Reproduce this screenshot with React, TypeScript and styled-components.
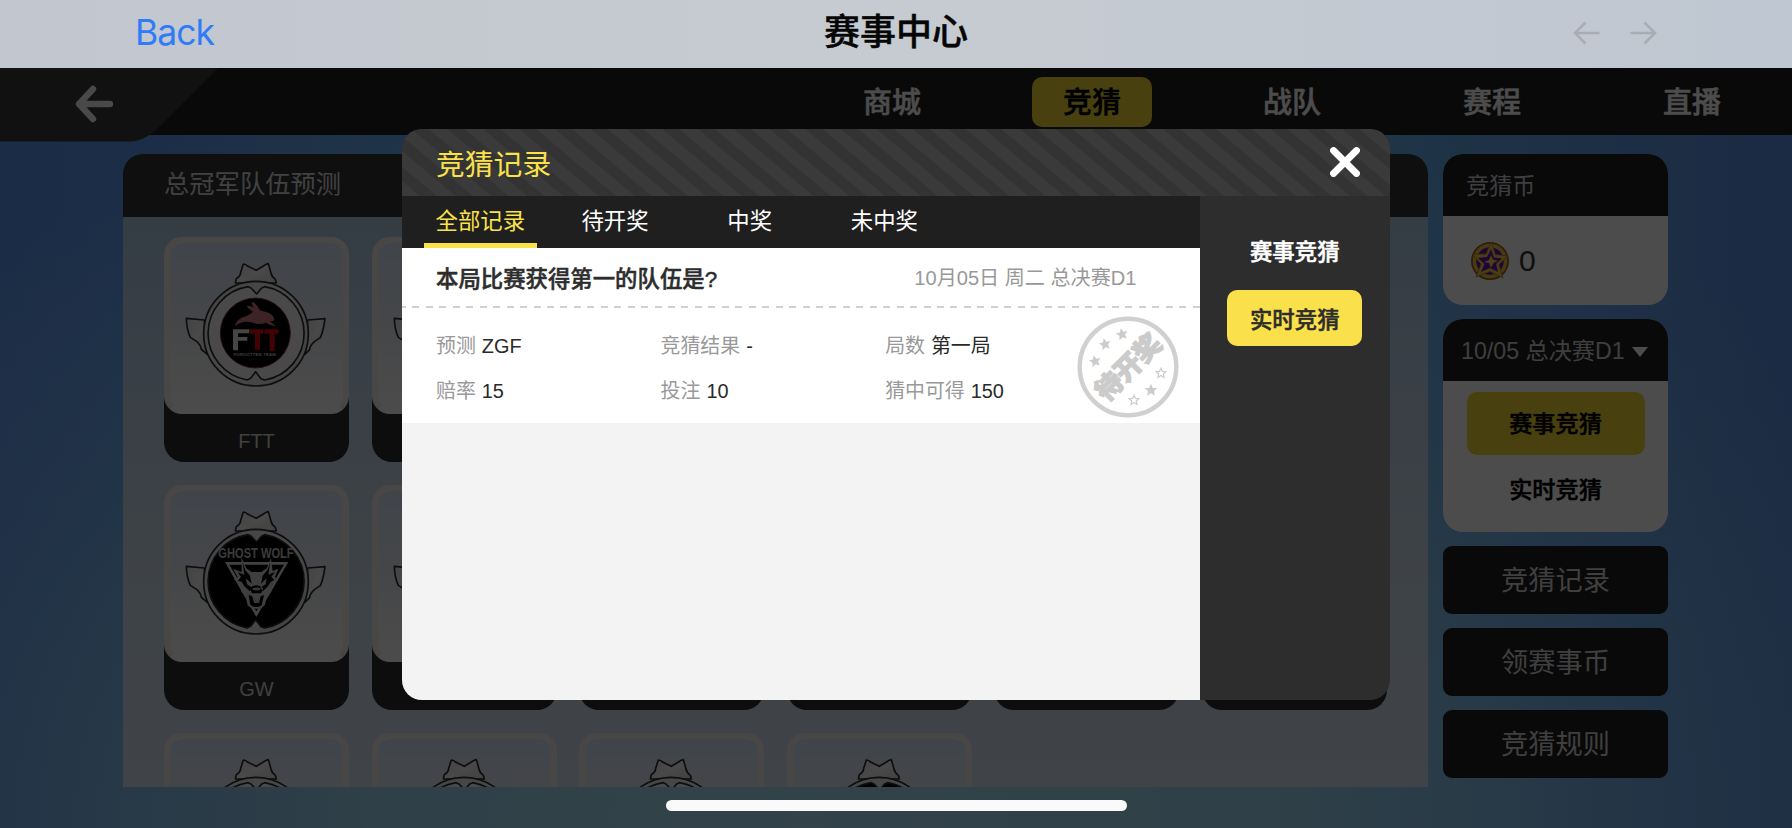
import * as React from 'react';
import styled, {createGlobalStyle, css} from 'styled-components';

const GlobalStyle = createGlobalStyle`
  * {
    box-sizing: border-box;
  }

  body {
    margin: 0;
    overflow: hidden;
    font-family: 'Liberation Sans', 'Noto Sans CJK SC', sans-serif;
    font-weight: 400;
  }
`;

const semibold = css`
  font-weight: 500;
  -webkit-text-stroke: 0.5px currentColor;
`;

const Screen = styled.div`
  position: relative;
  display: flex;
  flex-direction: column;
  width: 1792px;
  height: 828px;
  overflow: hidden;
`;

const TitleBar = styled.header`
  flex: 0 0 68px;
  display: grid;
  grid-template-columns: 1fr auto 1fr;
  align-items: center;
  padding: 0 135px 3px;
  background: linear-gradient(90deg, #c2c6cf, #c6cbd1 50%, #bfc7d2);
`;

const BackLink = styled.a`
  font: 400 35.5px/40px Inter, sans-serif;
  letter-spacing: -1px;
  color: #2f7cf6;
`;

const PageTitle = styled.h1`
  margin: 0;
  font-size: 36px;
  line-height: 40px;
  color: #060606;
  ${semibold};
`;

const HistoryButtons = styled.div`
  display: flex;
  justify-content: flex-end;
  gap: 28px;
`;

const Page = styled.main`
  flex: 1;
  display: flex;
  flex-direction: column;
  background: radial-gradient(
      ellipse 1250px 800px at 45% 100%,
      #aadff3 0%,
      rgba(165, 218, 240, 0.9) 35%,
      rgba(140, 200, 240, 0.4) 70%,
      rgba(120, 190, 240, 0) 100%
    ),
    linear-gradient(90deg, #5a93ec, #6eb8f4 40%, #6eb8f4 70%, #5a8ee0);
`;

const Nav = styled.nav`
  flex: 0 0 67px;
  display: flex;
  align-items: flex-start;
  justify-content: space-between;
  height: 67px;
  min-height: 0;
  background: #202020;
`;

const NavItems = styled.div`
  display: flex;
  padding-top: 8.5px;
`;

const NavItem = styled.div`
  width: 200px;
  display: flex;
  justify-content: center;
`;

const NavLabel = styled.span<{$active?: boolean}>`
  width: 120px;
  height: 50px;
  border-radius: 10px;
  font-size: 29px;
  line-height: 53px;
  text-align: center;
  color: ${props => (props.$active ? '#000' : '#fff')};
  background: ${props => (props.$active ? '#f5d632' : 'none')};
  ${semibold};
`;

const Content = styled.div`
  display: flex;
  gap: 15px;
  padding: 19px 0 0 123px;
`;

const Panel = styled.section`
  width: 1305px;
`;

const PanelHeader = styled.div`
  height: 63px;
  padding-left: 41px;
  border-radius: 20px 20px 0 0;
  font-size: 25.3px;
  line-height: 60px;
  color: #dadada;
  background: #333;
`;

const TeamGrid = styled.div`
  display: grid;
  grid-template-columns: repeat(6, 185px);
  gap: 23px 22.5px;
  align-content: start;
  height: 570px;
  padding: 20px 0 0 41px;
  overflow: hidden;
  background: linear-gradient(#b0cbe5, #cfdeee 60%, #d5e2ee);
`;

const TeamCard = styled.div`
  height: 225px;
  border-radius: 0 0 20px 20px;
  background: linear-gradient(transparent 120px, #2c2c2c 120px);
`;

const TeamPicture = styled.div`
  height: 177px;
  padding-top: 12px;
  border: 6px solid #f3eee8;
  border-bottom-color: #fbfbfb;
  border-radius: 18px;
  text-align: center;
  background: linear-gradient(#d8e4f7, #e8ecf2 50%, #fbfbfb 95%);
`;

const TeamName = styled.div`
  font-size: 20px;
  line-height: 54px;
  text-align: center;
  color: #d6d6d6;
`;

const Aside = styled.aside`
  width: 225px;
  display: flex;
  flex-direction: column;
  gap: 14px;
`;

const AsideCard = styled.div<{$height: number}>`
  height: ${props => props.$height}px;
  border-radius: 20px;
  overflow: hidden;
  background: #fff;
`;

const AsideHeader = styled.div<{$indent: number}>`
  display: flex;
  align-items: center;
  gap: 7px;
  height: 61.5px;
  padding: 0 0 2px ${props => props.$indent}px;
  font-size: 23.2px;
  color: #cfcfcf;
  background: #1e1e1e;
`;

const Caret = styled.svg`
  margin-top: 5px;
`;

const CoinRow = styled.div`
  display: flex;
  align-items: center;
  gap: 9px;
  padding: 25px 27px;
  font-size: 30px;
  line-height: 38px;
  color: #333;
`;

const MatchList = styled.div`
  display: flex;
  flex-direction: column;
  align-items: center;
  padding-top: 11px;
  gap: 3px;
`;

const MatchItem = styled.div<{$active?: boolean}>`
  width: 178px;
  height: 63px;
  border-radius: 10px;
  font-size: 23.2px;
  line-height: 65px;
  text-align: center;
  color: #000;
  ${semibold};
  ${props =>
    props.$active &&
    css`
      background: #f5d632;
    `};
`;

const AsideButton = styled.div`
  height: 68px;
  border-radius: 9px;
  font-size: 27.2px;
  line-height: 70px;
  text-align: center;
  color: #d2d2d2;
  background: #1e1e1e;
`;

const Overlay = styled.div`
  position: absolute;
  top: 68px;
  left: 0;
  width: 1792px;
  height: 760px;
  padding: 61px 402px 0;
  background: rgba(0, 0, 0, 0.7);
`;

const Dialog = styled.div`
  display: flex;
  flex-direction: column;
  width: 988px;
  height: 570.5px;
  border-radius: 20px;
  overflow: hidden;
  background: #2d2d2d;
`;

const DialogHeader = styled.div`
  flex: 0 0 67px;
  display: flex;
  align-items: center;
  justify-content: space-between;
  padding: 0 30px 1px 34px;
  font-size: 28.8px;
  color: #fae24a;
  background: repeating-linear-gradient(
    40deg,
    #3a3a3a 0,
    #3a3a3a 11px,
    #333 12px,
    #333 22px,
    #3a3a3a 23px
  );
`;

const DialogBody = styled.div`
  flex: 1;
  display: flex;
`;

const Records = styled.div`
  width: 797.5px;
  background: #f3f3f3;
`;

const Tabs = styled.div`
  display: flex;
  height: 52px;
  padding-left: 11px;
  background: #1f1f1f;
`;

const Tab = styled.div<{$active?: boolean}>`
  width: 134.7px;
  font-size: 22.4px;
  line-height: 51px;
  text-align: center;
  color: ${props => (props.$active ? '#fae24a' : '#fff')};

  &::after {
    content: '';
    display: ${props => (props.$active ? 'block' : 'none')};
    width: 112.5px;
    height: 5px;
    margin: -4px auto 0;
    background: #fae24a;
  }
`;

const Record = styled.article`
  height: 175px;
  background: #fff;
`;

const RecordHeader = styled.div`
  display: flex;
  justify-content: space-between;
  align-items: center;
  height: 60px;
  padding: 0 63px 3px 34px;
  background: repeating-linear-gradient(
      90deg,
      #d0d0d0 0,
      #d0d0d0 7px,
      transparent 7px,
      transparent 13.45px
    ) -3px 100% / 900px 2px no-repeat;
`;

const Question = styled.span`
  font-size: 22.4px;
  color: #2d2d2d;
  ${semibold};
`;

const MatchDate = styled.span`
  font-size: 20.1px;
  color: #999;
`;

const RecordBody = styled.div`
  position: relative;
  display: grid;
  grid-template-columns: repeat(3, 224.6px);
  grid-auto-rows: 45px;
  padding: 15px 0 0 34px;
`;

const Field = styled.div`
  font-size: 19.9px;
  line-height: 46px;
  color: #999;
  white-space: nowrap;
`;

const Value = styled.span`
  margin-left: 6px;
  color: #2a2a2a;
`;

const Stamp = styled.svg`
  position: absolute;
  top: 8px;
  right: 21px;
`;

const TypeList = styled.div`
  flex: 1;
  display: flex;
  flex-direction: column;
  align-items: center;
  gap: 12px;
  padding-top: 26px;
`;

const TypeButton = styled.div<{$active?: boolean}>`
  width: 135px;
  height: 56px;
  border-radius: 10px;
  font-size: 22.4px;
  line-height: 61px;
  text-align: center;
  color: ${props => (props.$active ? '#2d2d2d' : '#fff')};
  background: ${props => (props.$active ? '#fae04a' : 'none')};
  ${semibold};
`;

const HomeIndicator = styled.div`
  position: absolute;
  left: 666px;
  bottom: 17px;
  width: 461px;
  height: 11px;
  border-radius: 6px;
  background: #fafafa;
`;

const BackTab = () => (
  <svg width="220" height="74" viewBox="0 0 220 74">
    <path d="M0 0H218L157 61Q144 73.500 130 73.500H0Z" fill="#393939" />
    <path
      d="M110 36H80M93 21L79 36L93 51"
      fill="none"
      stroke="#f4f4f4"
      strokeWidth="6.400"
      strokeLinecap="round"
      strokeLinejoin="round"
    />
  </svg>
);

const HistoryArrow = ({forward}: {forward?: boolean}) => (
  <svg width="28" height="24" viewBox="0 0 28 24">
    <path
      d={forward ? 'M1.500 12H26M15.500 1.500L26 12L15.500 22.500' : 'M26.500 12H2M12.500 1.500L2 12L12.500 22.500'}
      fill="none"
      stroke="#a9adb2"
      strokeWidth="2.500"
    />
  </svg>
);

const FttLogo = () => (
  <g>
    <circle cx="229" cy="234" r="105" fill="#000" stroke="#8a3038" strokeWidth="3" />
    <path
      d="M167 214Q174 190 202 183Q214 178 222 170Q206 160 203 153Q211 150 224 158Q216 145 221 140Q234 148 242 166Q255 170 270 174Q286 183 286 194Q282 200 272 199L291 214Q275 213 261 203Q236 211 217 202Q190 195 167 214Z"
      fill="#c87880"
    />
    <path d="M162 223H211V235H177V246H205V257H177V286H162Z" fill="#e6e6e6" />
    <path
      d="M213 223H252V236H243V284H228V236H211ZM257 223H298V236H287V287H272V236H255Z"
      fill="#e00c10"
    />
    <text x="227" y="302" fontSize="13" fontWeight="700" fill="#ccc" textAnchor="middle" textLength="127">
      FORGOTTEN TEAM
    </text>
  </g>
);

const WolfLogo = () => (
  <g>
    <text
      x="231"
      y="164"
      fontSize="43"
      fontWeight="700"
      fill="#c4c4c4"
      textAnchor="middle"
      textLength="226"
      lengthAdjust="spacingAndGlyphs"
    >
      GHOST WOLF
    </text>
    <path d="M138 177H328L232 342Z" fill="#ddd" />
    <path d="M151 185H315L232 325Z" fill="#000" />
    <path
      d="M187 163L202 196L218 207H247L263 196L276 166L281 204L298 197L288 222L297 232L281 243L277 267L264 276L258 305L245 317H219L206 307L199 276L187 267L182 243L164 229L176 222L162 198L188 207Z"
      fill="#d0d0d0"
    />
    <path
      d="M191 178L199 202L213 218L218 242L200 226L204 244L220 254L212 264L196 250L188 236L177 233L186 221L176 208L196 215ZM273 180L265 202L251 218L246 242L263 226L260 244L244 254L252 264L267 250L276 236L286 231L277 221L288 207L268 215ZM212 256Q232 238 253 256L246 271H219ZM209 276L220 280L225 300H240L245 280L255 276L248 307L238 312H225L214 305Z"
      fill="#000"
    />
    <path d="M219 257Q232 250 246 257L240 262H225ZM226 279L232 293L239 279V298H226Z" fill="#bbb" />
  </g>
);

const Badge = ({team}: {team: string}) => {
  const dark = team === 'GW' || team === 'D4';
  return (
    <svg width="155" height="140" viewBox="0 0 465 420">
      <defs>
        <linearGradient id="metal" x1="0" y1="0" x2="1" y2="1">
          <stop offset="0" stopColor="#e2e2e2" />
          <stop offset="0.5" stopColor="#f4f4f4" />
          <stop offset="1" stopColor="#dadada" />
        </linearGradient>
      </defs>
      <g fill="url(#metal)" stroke="#2c2c2c" strokeWidth="5" strokeLinejoin="round">
        <path d="M76 195L22 190Q23 225 34 247L54 260Q65 270 67 283L84 297Z" />
        <path d="M386 195L438 191Q433 229 424 248L407 259Q392 272 392 284L379 297Z" />
        <path d="M169 84L172 71Q184 64 185 52L193 27Q201 27 207 34L232 46L252 34Q260 27 268 26L276 54Q278 65 289 73L292 84Z" />
        <circle cx="231" cy="236" r="157" />
        <path
          d="M207 95L216 99L233 117L248 99L257 95A142 142 0 0 1 257 375L246 371L230 350L215 370L204 375A142 142 0 0 1 207 95Z"
          fill={dark ? '#000' : '#f6f6f6'}
        />
      </g>
      {team === 'GW' && <WolfLogo />}
      {team === 'FTT' && <FttLogo />}
    </svg>
  );
};

const Coin = () => (
  <svg width="40" height="40" viewBox="0 0 40 40">
    <circle cx="20" cy="20" r="17.500" fill="#6a10b0" stroke="#a65d22" strokeWidth="3" />
    <circle cx="20" cy="20" r="15.500" fill="none" stroke="#e8c83b" strokeWidth="3.500" />
    <path
      d="M21 1L25.500 13.500L38 15L29 23.500L33 37L20 30.500L6 36L11 23L2 13L16 13Z"
      fill="#ecd046"
      stroke="#a9772b"
      strokeWidth="0.800"
    />
    <path d="M21 8L24 16.500L32 17.500L26 23L28 31L20 27L11 31L14.500 23L8 17L17 16Z" fill="#6a10b0" />
    <path d="M21 14L23 18.500L28 20L23.500 22L21 27L19 22L14 21L19 19Z" fill="#f4db55" />
  </svg>
);

const star = 'M0-6L1.800-2L6-1.800L2.800 1.200L3.800 5.500L0 3.200L-3.800 5.500L-2.800 1.200L-6-1.800L-1.800-2Z';

const PendingStamp = () => (
  <Stamp width="102" height="102" viewBox="-51 -51 102 102">
    <circle r="48.300" fill="none" stroke="#d0d0d0" strokeWidth="4.400" />
    {[[-33, -6], [-23, -23], [-6, -33]].map(([x, y]) => (
      <path key={x} d={star} transform={`translate(${x} ${y}) rotate(-12)`} fill="#ccc" />
    ))}
    {[[33, 6], [23, 23], [6, 33]].map(([x, y]) => (
      <path
        key={x}
        d={star}
        transform={`translate(${x} ${y}) scale(0.800)`}
        fill={x === 23 ? '#ccc' : 'none'}
        stroke="#ccc"
        strokeWidth="1.500"
      />
    ))}
    <text
      transform="rotate(-45)"
      y="10"
      fontSize="27"
      fontWeight="900"
      textAnchor="middle"
      fill="#cbcbcb"
      stroke="#cbcbcb"
      strokeWidth="1.200"
    >
      待开奖
    </text>
  </Stamp>
);

const navItems = ['商城', '竞猜', '战队', '赛程', '直播'];
const tabs = ['全部记录', '待开奖', '中奖', '未中奖'];
const teams = ['FTT', 'A2', 'A3', 'A4', 'A5', 'A6', 'GW', 'B2', 'B3', 'B4', 'B5', 'B6', 'D1', 'D2', 'D3', 'D4'];
const fields = [
  ['预测', 'ZGF'],
  ['竞猜结果', '-'],
  ['局数', '第一局'],
  ['赔率', '15'],
  ['投注', '10'],
  ['猜中可得', '150'],
];

const App: React.FC = () => {
  return (
    <Screen>
      <GlobalStyle />
      <TitleBar>
        <BackLink>Back</BackLink>
        <PageTitle>赛事中心</PageTitle>
        <HistoryButtons>
          <HistoryArrow />
          <HistoryArrow forward />
        </HistoryButtons>
      </TitleBar>
      <Page>
        <Nav>
          <BackTab />
          <NavItems>
            {navItems.map(item => (
              <NavItem key={item}>
                <NavLabel $active={item === '竞猜'}>{item}</NavLabel>
              </NavItem>
            ))}
          </NavItems>
        </Nav>
        <Content>
          <Panel>
            <PanelHeader>总冠军队伍预测</PanelHeader>
            <TeamGrid>
              {teams.map(team => (
                <TeamCard key={team}>
                  <TeamPicture>
                    <Badge team={team} />
                  </TeamPicture>
                  <TeamName>{team === 'FTT' || team === 'GW' ? team : null}</TeamName>
                </TeamCard>
              ))}
            </TeamGrid>
          </Panel>
          <Aside>
            <AsideCard $height={151}>
              <AsideHeader $indent={23}>竞猜币</AsideHeader>
              <CoinRow>
                <Coin />0
              </CoinRow>
            </AsideCard>
            <AsideCard $height={213}>
              <AsideHeader $indent={18}>
                10/05 总决赛D1
                <Caret width="16" height="11" viewBox="0 0 16 11">
                  <path d="M0 1H16L8 11Z" fill="#fff" />
                </Caret>
              </AsideHeader>
              <MatchList>
                <MatchItem $active>赛事竞猜</MatchItem>
                <MatchItem>实时竞猜</MatchItem>
              </MatchList>
            </AsideCard>
            <AsideButton>竞猜记录</AsideButton>
            <AsideButton>领赛事币</AsideButton>
            <AsideButton>竞猜规则</AsideButton>
          </Aside>
        </Content>
      </Page>
      <Overlay>
        <Dialog>
          <DialogHeader>
            竞猜记录
            <svg width="30" height="30" viewBox="0 0 30 30">
              <path d="M3.500 3.500L26.500 26.500M26.500 3.500L3.500 26.500" stroke="#fff" strokeWidth="6.800" strokeLinecap="round" />
            </svg>
          </DialogHeader>
          <DialogBody>
            <Records>
              <Tabs>
                {tabs.map((tab, index) => (
                  <Tab key={tab} $active={index === 0}>
                    {tab}
                  </Tab>
                ))}
              </Tabs>
              <Record>
                <RecordHeader>
                  <Question>本局比赛获得第一的队伍是?</Question>
                  <MatchDate>10月05日 周二 总决赛D1</MatchDate>
                </RecordHeader>
                <RecordBody>
                  {fields.map(([label, value]) => (
                    <Field key={label}>
                      {label}
                      <Value>{value}</Value>
                    </Field>
                  ))}
                  <PendingStamp />
                </RecordBody>
              </Record>
            </Records>
            <TypeList>
              <TypeButton>赛事竞猜</TypeButton>
              <TypeButton $active>实时竞猜</TypeButton>
            </TypeList>
          </DialogBody>
        </Dialog>
      </Overlay>
      <HomeIndicator />
    </Screen>
  );
};

export default App;
